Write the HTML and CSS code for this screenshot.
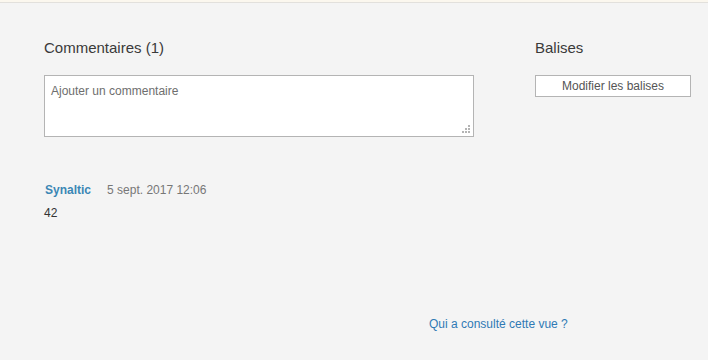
FILE: index.html
```html
<!DOCTYPE html>
<html lang="fr">
<head>
    <meta charset="UTF-8">
    <title>Commentaires</title>
    <link rel="stylesheet" href="styles.css">
</head>
<body>
    <div class="top-bar"></div>

    <div class="page">
        <div class="comments">
            <h2>Commentaires (1)</h2>
            <div class="comment-box">
                <textarea placeholder="Ajouter un commentaire"></textarea>
                <svg class="grip" width="8" height="8" viewBox="0 0 8 8">
                    <rect x="6" y="0" width="2" height="2" fill="#b4b4b4"/>
                    <rect x="3" y="3" width="2" height="2" fill="#b4b4b4"/>
                    <rect x="6" y="3" width="2" height="2" fill="#b4b4b4"/>
                    <rect x="0" y="6" width="2" height="2" fill="#b4b4b4"/>
                    <rect x="3" y="6" width="2" height="2" fill="#b4b4b4"/>
                    <rect x="6" y="6" width="2" height="2" fill="#b4b4b4"/>
                </svg>
            </div>

            <div class="comment">
                <div class="comment-head">
                    <span class="author">Synaltic</span>
                    <span class="date">5 sept. 2017 12:06</span>
                </div>
                <div class="comment-text">42</div>
            </div>
        </div>

        <div class="tags">
            <h2>Balises</h2>
            <button class="edit-tags">Modifier les balises</button>
        </div>
    </div>

    <div class="footer">
        <a href="#" class="viewers">Qui a consulté cette vue ?</a>
    </div>
</body>
</html>
```

FILE: styles.css
```css
body {
    margin: 0;
    font-family: "Liberation Sans", Arial, sans-serif;
    background-color: #f4f4f4;
    color: #333;
    height: 360px;
    overflow: hidden;
}

.top-bar {
    height: 2px;
    background-color: #fbf7ee;
    border-bottom: 1px solid #e2e0dc;
}

.page {
    display: flex;
    padding: 35px 0 0 44px;
}

h2 {
    margin: 0;
    font-size: 15px;
    font-weight: normal;
    line-height: 20px;
    color: #3a3a3a;
}

.comments {
    width: 430px;
}

.comment-box {
    position: relative;
    margin-top: 17px;
}

textarea {
    display: block;
    box-sizing: border-box;
    width: 430px;
    height: 62px;
    margin: 0;
    padding: 8px 6px;
    border: 1px solid #b4b4b4;
    background: #fff;
    font-family: "Liberation Sans", Arial, sans-serif;
    font-size: 12px;
    color: #333;
    resize: none;
}

textarea::placeholder {
    color: #6e6e6e;
}

.grip {
    position: absolute;
    right: 4px;
    bottom: 4px;
}

.comment {
    margin-top: 46px;
    font-size: 12px;
}

.comment-head {
    display: flex;
    gap: 16px;
    padding-left: 1px;
}

.author {
    font-weight: bold;
    color: #3b87b5;
}

.date {
    color: #777;
}

.comment-text {
    margin-top: 9px;
    color: #333;
}

.tags {
    margin-left: 61px;
}

.edit-tags {
    display: block;
    margin-top: 17px;
    width: 156px;
    height: 22px;
    padding: 0;
    border: 1px solid #b4b4b4;
    background: #fff;
    font-family: "Liberation Sans", Arial, sans-serif;
    font-size: 12px;
    color: #555;
    cursor: pointer;
}

.footer {
    padding: 97px 0 0 429px;
    font-size: 12px;
}

.viewers {
    color: #2f7ab4;
    text-decoration: none;
}
```
